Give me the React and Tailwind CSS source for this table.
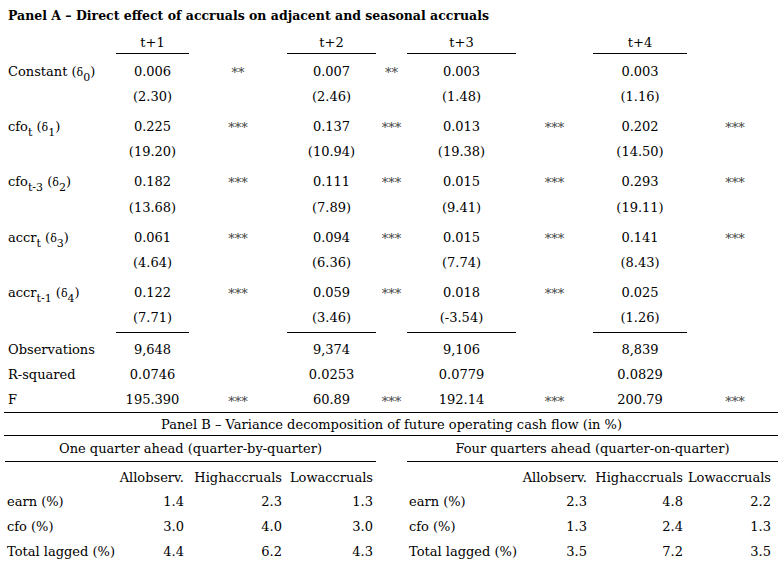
import React from "react";

const cols = "grid grid-cols-[116px_73px_98px_89px_31px_109px_77px_94px_96px]";
const colsB = "grid grid-cols-[118px_66px_98px_91px_31px_116px_67px_96px_88px]";

const Sub = ({ children }) => (
  <sub className="text-[11px] bottom-[-5px]">{children}</sub>
);

const Delta = ({ n }) => (
  <>
    (<span className="text-[11px]">δ</span>
    <Sub>{n}</Sub>)
  </>
);

const coefRows = [
  {
    label: <>Constant <Delta n="0" /></>,
    vals: ["0.006", "0.007", "0.003", "0.003"],
    stars: ["**", "**", "", ""],
    t: ["(2.30)", "(2.46)", "(1.48)", "(1.16)"],
  },
  {
    label: <>cfo<Sub>t</Sub> <Delta n="1" /></>,
    vals: ["0.225", "0.137", "0.013", "0.202"],
    stars: ["***", "***", "***", "***"],
    t: ["(19.20)", "(10.94)", "(19.38)", "(14.50)"],
  },
  {
    label: <>cfo<Sub>t-3</Sub> <Delta n="2" /></>,
    vals: ["0.182", "0.111", "0.015", "0.293"],
    stars: ["***", "***", "***", "***"],
    t: ["(13.68)", "(7.89)", "(9.41)", "(19.11)"],
  },
  {
    label: <>accr<Sub>t</Sub> <Delta n="3" /></>,
    vals: ["0.061", "0.094", "0.015", "0.141"],
    stars: ["***", "***", "***", "***"],
    t: ["(4.64)", "(6.36)", "(7.74)", "(8.43)"],
  },
  {
    label: <>accr<Sub>t-1</Sub> <Delta n="4" /></>,
    vals: ["0.122", "0.059", "0.018", "0.025"],
    stars: ["***", "***", "***", ""],
    t: ["(7.71)", "(3.46)", "(-3.54)", "(1.26)"],
  },
];

// heights of the t-stat rows, the last one carries the rule
const tHeights = ["h-[25px]", "h-[25px]", "h-[26px]", "h-[25px]", "h-[28px]"];

const statRows = [
  { label: "Observations", vals: ["9,648", "9,374", "9,106", "8,839"], stars: ["", "", "", ""] },
  { label: "R-squared", vals: ["0.0746", "0.0253", "0.0779", "0.0829"], stars: ["", "", "", ""] },
  { label: "F", vals: ["195.390", "60.89", "192.14", "200.79"], stars: ["***", "***", "***", "***"] },
];

const varRows = [
  { label: "earn (%)", left: ["1.4", "2.3", "1.3"], right: ["2.3", "4.8", "2.2"] },
  { label: "cfo (%)", left: ["3.0", "4.0", "3.0"], right: ["1.3", "2.4", "1.3"] },
  { label: "Total lagged (%)", left: ["4.4", "6.2", "4.3"], right: ["3.5", "7.2", "3.5"] },
];

// one row of panel A: label, then value / stars pairs
function Row({ label, vals, stars = [], h, pad = "", line = false, cellPad = "" }) {
  return (
    <div className={`${cols} ${h} ${pad} items-center`}>
      <div className="pl-[8px] whitespace-nowrap">{label}</div>
      {vals.map((v, i) => (
        <React.Fragment key={i}>
          <div className={`h-full flex items-center justify-center ${cellPad} ${line ? "border-b border-black" : ""}`}>
            {v}
          </div>
          <div className="text-center text-[#444] pt-[3px]">{stars[i]}</div>
        </React.Fragment>
      ))}
    </div>
  );
}

export default function App() {
  return (
    <div className="w-[783px] h-[568px] bg-white text-black font-['DejaVu_Serif',serif] text-[13px] leading-none overflow-hidden">
      <div className="h-[28px] pl-[8px] pt-[10px] font-bold text-[12.5px]">
        Panel A – Direct effect of accruals on adjacent and seasonal accruals
      </div>

      <Row label="" vals={["t+1", "t+2", "t+3", "t+4"]} h="h-[26px]" cellPad="pt-[4px]" line />

      {coefRows.map((r, i) => (
        <React.Fragment key={i}>
          <Row label={r.label} vals={r.vals} stars={r.stars} h="h-[30px]" pad="pt-[4px]" />
          <Row label="" vals={r.t} h={tHeights[i]} line={i === coefRows.length - 1} cellPad={i === coefRows.length - 1 ? "pb-[3px]" : ""} />
        </React.Fragment>
      ))}

      <div className="pt-[4px]">
        {statRows.map((r) => (
          <Row key={r.label} label={r.label} vals={r.vals} stars={r.stars} h="h-[25px]" />
        ))}
      </div>
      <div className="ml-[4px] mr-[5px] h-px bg-black" />

      <div className="h-[22px] flex items-center justify-center">
        Panel B – Variance decomposition of future operating cash flow (in %)
      </div>
      <div className="ml-[4px] mr-[5px] h-px bg-black" />

      <div className="flex h-[26px]">
        <div className="ml-[5px] w-[371px] flex items-center justify-center border-b border-black">
          One quarter ahead (quarter-by-quarter)
        </div>
        <div className="ml-[31px] w-[371px] flex items-center justify-center border-b border-black">
          Four quarters ahead (quarter-on-quarter)
        </div>
      </div>

      <div className={`${colsB} h-[27px] pt-[3px] items-center`}>
        <div />
        <div className="text-right">Allobserv.</div>
        <div className="text-right">Highaccruals</div>
        <div className="text-right">Lowaccruals</div>
        <div />
        <div />
        <div className="text-right">Allobserv.</div>
        <div className="text-right">Highaccruals</div>
        <div className="text-right">Lowaccruals</div>
      </div>
      {varRows.map((r) => (
        <div key={r.label} className={`${colsB} h-[25px] items-center`}>
          <div className="pl-[7px] whitespace-nowrap">{r.label}</div>
          {r.left.map((v, i) => (
            <div key={i} className="text-right">{v}</div>
          ))}
          <div />
          <div className="pl-[5px] whitespace-nowrap">{r.label}</div>
          {r.right.map((v, i) => (
            <div key={i} className="text-right">{v}</div>
          ))}
        </div>
      ))}
    </div>
  );
}
